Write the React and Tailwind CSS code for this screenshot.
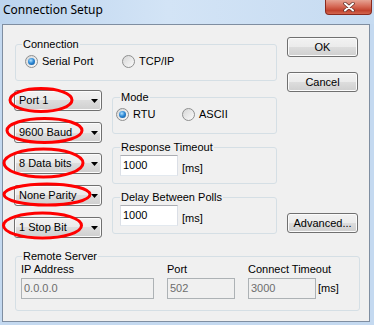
import React from 'react';

const btn =
  'flex items-center justify-center h-[20px] w-[71px] rounded-[3px] border border-[#707070] bg-[linear-gradient(to_bottom,#f2f2f2_0%,#ebebeb_50%,#dddddd_50%,#cfcfcf_100%)] shadow-[inset_0_0_0_1px_#fbfbfb] text-black';

function Group({ label, className = '', legendClass = 'ml-[6px]', children }) {
  return (
    <fieldset className={`border border-[#d5dfe5] rounded-[3px] ${className}`}>
      <legend className={`${legendClass} px-[1px] leading-[13px]`}>{label}</legend>
      {children}
    </fieldset>
  );
}

function Radio({ checked, label, className = '' }) {
  return (
    <div className={`flex items-center h-[13px] ${className}`}>
      <span className="flex items-center justify-center w-[13px] h-[13px] shrink-0 rounded-full border border-[#8e8f8f] bg-[linear-gradient(135deg,#d6d6d6,#fbfbfb)]">
        {checked && (
          <span className="w-[7px] h-[7px] rounded-full bg-[radial-gradient(circle_at_40%_35%,#b4e3ff_0%,#2f8ad6_45%,#0b4b8c_100%)]" />
        )}
      </span>
      <span className="ml-[4px]">{label}</span>
    </div>
  );
}

function Combo({ label, className = '' }) {
  return (
    <div
      className={`flex items-center h-[21px] w-[88px] pl-[4px] pr-[3px] rounded-[3px] border border-[#707070] bg-[linear-gradient(to_bottom,#f2f2f2_0%,#ebebeb_50%,#dddddd_50%,#cfcfcf_100%)] shadow-[inset_0_0_0_1px_#fbfbfb] ${className}`}
    >
      <span className="flex-1">{label}</span>
      <svg width="7" height="4" viewBox="0 0 7 4">
        <polygon points="0,0 7,0 3.5,4" fill="#000" />
      </svg>
    </div>
  );
}

function TextBox({ value }) {
  return (
    <div className="flex items-center w-[58px] h-[21px] pl-[2px] border border-[#abadb3] border-l-[#dbdfe6] border-r-[#dbdfe6] border-b-[#e3e9ef] bg-white">
      {value}
    </div>
  );
}

function Disabled({ value, w }) {
  return (
    <div className={`flex items-center h-[21px] pl-[2px] border border-[#adb2b5] bg-[#f0f0f0] text-[#6d6d6d] ${w}`}>
      {value}
    </div>
  );
}

export default function App() {
  return (
    <div className="relative w-[374px] h-[325px] overflow-hidden bg-[#c4d9f0] font-['Liberation_Sans',Arial,sans-serif] text-[11px] leading-[13px] text-black">
      {/* title bar */}
      <div className="flex h-[24px] bg-[linear-gradient(to_right,#bcd4ee_0%,#d3e4f6_45%,#c6dbf1_100%)]">
        <span className="pl-[3px] pt-[2px] font-['Noto_Sans',sans-serif] text-[12px] leading-[16px]">Connection Setup</span>
        <div className="ml-auto mr-[2px] flex items-center justify-center w-[47px] h-[15px] rounded-b-[4px] border border-t-0 border-[#8a2a1e] bg-[linear-gradient(to_bottom,#e6a393_0%,#d66a57_45%,#c2432e_75%,#d2664f_100%)]">
          <svg width="12" height="10" viewBox="0 0 12 10">
            <path d="M2 1.5 L10 8.5 M10 1.5 L2 8.5" stroke="#5a2b25" strokeWidth="3.4" strokeLinecap="round" />
            <path d="M2 1.5 L10 8.5 M10 1.5 L2 8.5" stroke="#ffffff" strokeWidth="2" strokeLinecap="round" />
          </svg>
        </div>
      </div>

      {/* client area */}
      <div className="ml-[2px] w-[368px] h-[298px] border border-[#7f8ea1] bg-[#f0f0f0]">
        <div className="flex pt-[12px]">
          <div className="ml-[12px] w-[262px]">
            <Group label="Connection" className="mt-[1px] h-[43px]">
              <div className="flex pt-[4px] pl-[9px]">
                <Radio checked label="Serial Port" className="w-[97px]" />
                <Radio label="TCP/IP" />
              </div>
            </Group>

            <div className="flex mt-[9px]">
              <div className="-ml-px flex flex-col w-[88px]">
                <Combo label="Port 1" />
                <Combo label="9600 Baud" className="mt-[11px]" />
                <Combo label="8 Data bits" className="mt-[10px]" />
                <Combo label="None Parity" className="mt-[11px]" />
                <Combo label="1 Stop Bit" className="mt-[11px]" />
              </div>
              <div className="ml-[10px] w-[165px] mt-[1px] flex flex-col gap-[7px]">
                <Group label="Mode" legendClass="ml-[7px]" className="h-[43px]">
                  <div className="flex pt-[4px] pl-[3px]">
                    <Radio checked label="RTU" className="w-[66px]" />
                    <Radio label="ASCII" />
                  </div>
                </Group>
                <Group label="Response Timeout" legendClass="ml-[7px]" className="h-[43px]">
                  <div className="flex items-end mt-[1px] pl-[7px]">
                    <TextBox value="1000" />
                    <span className="ml-[4px] mb-[1px]">[ms]</span>
                  </div>
                </Group>
                <Group label="Delay Between Polls" legendClass="ml-[7px]" className="h-[43px]">
                  <div className="flex items-end mt-[1px] pl-[7px]">
                    <TextBox value="1000" />
                    <span className="ml-[4px] mb-[1px]">[ms]</span>
                  </div>
                </Group>
              </div>
            </div>
          </div>

          <div className="ml-[10px] flex flex-col">
            <div className={`${btn} border-[#3c7fb1] bg-[linear-gradient(to_bottom,#eaf6fd_0%,#d9f0fc_50%,#bee6fd_50%,#a7d9f5_100%)] shadow-[inset_0_0_0_1px_#ccecfc]`}>OK</div>
            <div className={`${btn} mt-[15px]`}>Cancel</div>
            <div className={`${btn} mt-[121px]`}>Advanced...</div>
          </div>
        </div>

        <Group label="Remote Server" className="ml-[12px] mt-[12px] w-[345px] h-[61px]">
          <div className="flex pl-[5px]">
            <div className="w-[133px]">
              <div>IP Address</div>
              <Disabled value="0.0.0.0" w="w-[133px] mt-[2px]" />
            </div>
            <div className="ml-[13px] w-[68px]">
              <div>Port</div>
              <Disabled value="502" w="w-[68px] mt-[2px]" />
            </div>
            <div className="ml-[13px]">
              <div>Connect Timeout</div>
              <div className="flex items-end mt-[2px]">
                <Disabled value="3000" w="w-[68px]" />
                <span className="ml-[2px] mb-[4px]">[ms]</span>
              </div>
            </div>
          </div>
        </Group>
      </div>

      {/* red annotation ellipses */}
      <svg className="absolute left-0 top-0 pointer-events-none" width="374" height="325" viewBox="0 0 374 325">
        <g fill="none" stroke="#ff0000" strokeWidth="3">
          <ellipse cx="41" cy="100" rx="31" ry="11.5" />
          <ellipse cx="44.5" cy="130.5" rx="37.5" ry="12" />
          <ellipse cx="43.5" cy="163" rx="39.5" ry="14" />
          <ellipse cx="47" cy="194.5" rx="43" ry="10.5" />
          <ellipse cx="42.5" cy="225.5" rx="39" ry="12.5" />
        </g>
      </svg>
    </div>
  );
}
